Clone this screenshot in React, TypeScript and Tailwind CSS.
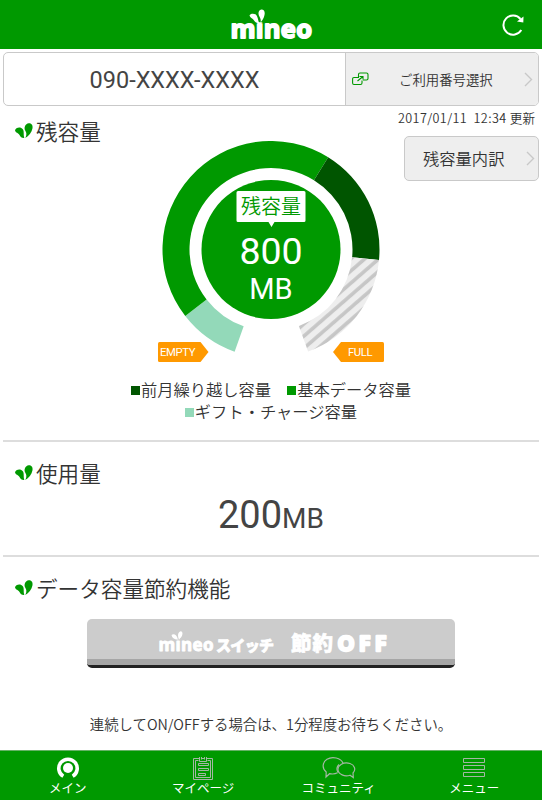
import type { ReactNode } from "react"

const CENTER_X = 113
const CENTER_Y = 108.5

const point = (angle: number, radius: number) => {
  const rad = (angle * Math.PI) / 180
  return `${CENTER_X + radius * Math.sin(rad)} ${CENTER_Y - radius * Math.cos(rad)}`
}

// angles run clockwise from twelve o'clock
const ringSlice = (from: number, to: number) => {
  const large = to - from > 180 ? 1 : 0
  return `M${point(from, 108.5)} A108.5 108.5 0 ${large} 1 ${point(to, 108.5)} L${point(to, 81.5)} A81.5 81.5 0 ${large} 0 ${point(from, 81.5)} Z`
}

const Leaves = ({ className }: { className?: string }) => (
  <svg viewBox="0 0 18 16" className={className} fill="currentColor">
    <path d="M0 7.500C0.500 4.700 5.500 3.300 7.800 6.300C9.400 8.600 8.200 11 9.300 15C6.800 15.200 5.500 14 4.500 12C3.300 9.800 0.800 10 0 7.500Z" />
    <path d="M10.300 15C12 11.800 11.500 9.500 10.300 7.800C8.500 4.500 10.300 0.800 13.700 0.200C16.800 0 18 2.600 17.500 5.200C16.800 9.500 13.700 12.700 10.300 15Z" />
  </svg>
)

const Logo = () => (
  <svg width="88" height="44" viewBox="0 0 88 44" className="text-white">
    <text
      x="3.500"
      y="34.500"
      textLength="81.500"
      className="fill-white stroke-white font-['Open_Sans'] text-[25.5px] font-bold"
      strokeWidth="1.800"
      strokeLinejoin="round"
    >
      mineo
    </text>
    <path d="M27 8H41V19.200H27Z" fill="#009900" />
    <path
      d="M22.500 12.500C23.500 10 28.500 10 30 13.200C31.200 15.500 31 17.500 32.200 19.700C29.500 20.500 27.700 18.800 26.500 16.800C25.300 15 23.300 15 22.500 12.500Z M33.500 19.500C34.300 16.500 33 14.500 31.900 12.500C30.800 9.500 32 6.800 34.300 6.400C37.200 6.300 38.200 9 37.500 12C36.900 15 35.200 17.500 33.500 19.500Z"
      fill="currentColor"
    />
  </svg>
)

const Chevron = ({ className }: { className?: string }) => (
  <svg
    width="9"
    height="15"
    viewBox="0 0 9 15"
    fill="none"
    stroke="#c8c8c8"
    strokeWidth="1.4"
    className={className}
  >
    <path d="M1 1L7.5 7.5L1 14" />
  </svg>
)

const SectionTitle = ({ children }: { children: ReactNode }) => (
  <h2 className="flex items-center text-[21.6px] leading-8 font-[350]">
    <Leaves className="mr-[3px] h-4 w-[18px] text-[#009900]" />
    {children}
  </h2>
)

const Gauge = () => (
  <svg width="226" height="222" viewBox="0 0 226 222" className="mx-auto -mt-10 block">
    <defs>
      <pattern
        id="hatch"
        width="9.2"
        height="9.2"
        patternUnits="userSpaceOnUse"
        patternTransform="rotate(-41)"
      >
        <rect width="9.2" height="9.2" fill="#eeeeee" />
        <rect width="9.2" height="3.6" y="2" fill="#c6c6c6" />
      </pattern>
    </defs>
    <path d={ringSlice(199.6, 232.2)} fill="#93d9b9" />
    <path d={ringSlice(232.2, 391.8)} fill="#009900" />
    <path d={ringSlice(31.8, 95.5)} fill="#005500" />
    <path d={ringSlice(95.5, 160)} fill="url(#hatch)" />
    <circle cx={CENTER_X} cy={CENTER_Y} r="69.5" fill="#009900" />
    <path
      d="M80 50H146Q147.500 50 147.500 51.500V79.500Q147.500 81 146 81H116.500L113.500 86L110.500 81H80Q78.500 81 78.500 79.500V51.500Q78.500 50 80 50Z"
      fill="#fff"
    />
    <g textAnchor="middle">
      <text x="113" y="73" className="fill-[#009900] text-[20px] font-[350]">
        残容量
      </text>
      <text x="113" y="123" className="fill-white font-[Roboto] text-[37.5px]">
        800
      </text>
      <text x="113" y="158" className="fill-white font-[Roboto] text-[29px]">
        MB
      </text>
    </g>
    <path d="M1.500 201H42.500L50.500 211L42.500 221H1.500Q0 221 0 219.500V202.500Q0 201 1.500 201Z" fill="#ff9900" />
    <path d="M224.500 201H183L175 211L183 221H224.500Q226 221 226 219.500V202.500Q226 201 224.500 201Z" fill="#ff9900" />
    <text x="2" y="215.300" textLength="35.500" className="fill-white font-[Roboto] text-[11.3px]">
      EMPTY
    </text>
    <text x="190" y="215.300" textLength="24.500" className="fill-white font-[Roboto] text-[11.3px]">
      FULL
    </text>
  </svg>
)

const LegendItem = ({ color, label }: { color: string; label: string }) => (
  <span className="flex items-center">
    <span className={`mt-[3px] mr-[1px] h-[9px] w-[9px] ${color}`} />
    {label}
  </span>
)

const tabs = [
  {
    label: "メイン",
    icon: (
      <svg width="24" height="24" viewBox="0 0 24 24" fill="none" stroke="white">
        <path d="M7.300 20.300A9.200 9.200 0 1 1 16.700 20.300" strokeWidth="3.600" />
        <circle cx="12" cy="12" r="5" fill="white" stroke="none" />
      </svg>
    ),
  },
  {
    label: "マイページ",
    icon: (
      <svg width="22" height="26" viewBox="0 0 22 26" fill="none" stroke="#a3b8a3" strokeWidth="1">
        <path d="M7 3.500H1.500V24.500H20.500V3.500H15M9.500 3.500H12.500" />
        <path d="M6.500 5.500H3.500V22.500H18.500V5.500H15.500M7.500 2V6.500H14.500V2M9.500 2V4.500M12.500 2V4.500" />
        <path d="M6.500 8.500H16.500V10.500H6.500ZM6.500 13.500H16.500V15.500H6.500ZM6.500 18.500H13.500V20.500H6.500Z" />
      </svg>
    ),
  },
  {
    label: "コミュニティ",
    icon: (
      <svg width="34" height="24" viewBox="0 0 34 24" fill="none" stroke="#a3b8a3" strokeWidth="1.200">
        <path d="M15.500 16.800C13.500 17.900 10 18.200 7.500 17.700L4 21L4.200 16C-0.200 12.700 0.200 6.300 5 3.300C10.500 0 18.700 2 21 7" />
        <path d="M31 17C34.300 13.700 32.500 8.800 28 7.500C21.500 5.600 15.500 9.300 16 14C16.500 18.300 22.500 21 28 19.200L31.300 21.500Z" />
        <path d="M17 8.500C14.500 11 14.500 14 16 16.500" />
      </svg>
    ),
  },
  {
    label: "メニュー",
    icon: (
      <svg width="24" height="22" viewBox="0 0 24 22" fill="none" stroke="#a3b8a3" strokeWidth="1">
        <path d="M1.500 1.500H22.500V5.500H1.500ZM1.500 8.500H22.500V12.500H1.500ZM1.500 15.500H22.500V19.500H1.500Z" />
      </svg>
    ),
  },
]

const App = () => {
  return (
    <div className="flex h-[800px] w-[542px] flex-col overflow-hidden bg-white font-['Noto_Sans_CJK_JP',sans-serif] text-[#333]">
      <header className="grid h-[49px] shrink-0 grid-cols-[1fr_88px_1fr] items-center bg-[#009900]">
        <div />
        <Logo />
        <svg
          width="24"
          height="24"
          viewBox="0 0 24 24"
          fill="none"
          stroke="white"
          strokeWidth="2"
          className="mr-[17px] justify-self-end"
        >
          <path d="M20.300 17A9.600 9.600 0 1 1 19.500 6" />
          <path d="M22.500 3.500L22.300 9.500L16 8.500Z" fill="white" stroke="none" />
        </svg>
      </header>

      <main className="px-[3px]">
        <div className="mt-[3px] flex h-[54px] overflow-hidden rounded-[5px] border border-[#c9c9c9]">
          <div className="flex flex-1 items-center justify-center pt-[4px] font-[Roboto] text-[23.5px] text-[#444]">
            090-XXXX-XXXX
          </div>
          <button className="flex w-[193px] items-center border-l border-[#c9c9c9] bg-[#eee] text-[13.4px] font-[350]">
            <svg
              width="17"
              height="14"
              viewBox="0 0 17 14"
              fill="none"
              stroke="#009900"
              strokeWidth="1.100"
              className="ml-[6px]"
            >
              <path d="M6.500 5V2.500Q6.500 1 8 1H14.500Q16 1 16 2.500V6.500Q16 8 14.500 8H11" />
              <path d="M7 5.500H2Q0.600 5.500 0.600 7V11Q0.600 12.500 2 12.500H8.500Q10 12.500 10 11V8.500M5.500 9L11 4.500M7.500 4.500H11V7.500" />
            </svg>
            <span className="ml-[30px]">ご利用番号選択</span>
            <Chevron className="mr-[5px] ml-auto" />
          </button>
        </div>

        <section className="h-[334px]">
          <div className="flex h-[75px] justify-between">
            <div className="pt-[9px] pl-[12px]">
              <SectionTitle>残容量</SectionTitle>
            </div>
            <div className="flex flex-col items-end">
              <p className="mt-[2px] mr-1 h-7 text-[12.6px] leading-5 font-[350] whitespace-pre">
                <span className="tracking-[0.4px]">2017/01/11{"  "}12:34 </span>更新
              </p>
              <button className="flex h-[46px] w-[135px] items-center rounded-[5px] border border-[#c9c9c9] bg-[#eee] pl-[18px] text-[16.3px] font-[350]">
                残容量内訳
                <Chevron className="mr-[3px] ml-auto" />
              </button>
            </div>
          </div>
          <Gauge />
          <div className="mt-[15px] flex flex-wrap justify-center gap-x-4 px-20 text-[16.3px] leading-[22px] font-[350]">
            <LegendItem color="bg-[#005500]" label="前月繰り越し容量" />
            <LegendItem color="bg-[#009900]" label="基本データ容量" />
            <LegendItem color="bg-[#93d9b9]" label="ギフト・チャージ容量" />
          </div>
        </section>

        <section className="h-[115px] border-t-2 border-[#ddd] pt-[15px] pl-[12px]">
          <SectionTitle>使用量</SectionTitle>
          <p className="mt-[4px] mr-[12px] text-center font-[Roboto] text-[38px] leading-[44px] text-[#444]">
            200<span className="text-[28px]">MB</span>
          </p>
        </section>

        <section className="border-t-2 border-[#ddd] pt-[15px] pl-[12px]">
          <SectionTitle>データ容量節約機能</SectionTitle>
          <button className="mt-[15px] ml-[72px] flex h-[49px] w-[368px] flex-col overflow-hidden rounded-[5px] border-b-[3px] border-[#222] bg-[#ccc] text-white">
            <svg width="368" height="40" viewBox="0 0 368 40">
              <g fill="white" stroke="white" strokeLinejoin="round">
                <text
                  x="71.500"
                  y="31.500"
                  textLength="55"
                  strokeWidth="0.900"
                  className="font-['Open_Sans'] text-[17px] font-bold"
                >
                  mineo
                </text>
                <text x="129" y="31.500" textLength="58" strokeWidth="0.800" className="text-[15px] font-black">
                  スイッチ
                </text>
                <text x="204" y="32" textLength="42" strokeWidth="0.600" className="text-[20.5px] font-black">
                  節約
                </text>
                <text
                  x="250.500"
                  y="31.500"
                  textLength="49"
                  strokeWidth="2.400"
                  className="font-['Open_Sans'] text-[21.5px] font-bold"
                >
                  OFF
                </text>
              </g>
              <path d="M86 14H98V20.700H86Z" fill="#cccccc" />
              <path
                d="M84.500 16C86.500 14 90 15.500 90.900 20.600C87.500 20.800 85 19 84.500 16Z M92 20.400C90.300 16.500 91 12.700 94 12.300C96.700 13.300 95.600 18 92 20.400Z"
                fill="white"
              />
            </svg>
            <span className="block h-[6px] w-full bg-[#a6a6a6]" />
          </button>
          <p className="mt-[45px] mr-[12px] text-center text-[14.4px] leading-[22px] font-[350]">
            連続してON/OFFする場合は、1分程度お待ちください。
          </p>
        </section>
      </main>

      <nav className="mt-auto grid h-[50px] shrink-0 grid-cols-4 border-t border-[#66b266] bg-[#009900] text-[12.5px] text-white">
        {tabs.map((tab) => (
          <a key={tab.label} className="flex flex-col items-center">
            <span className="mt-[4px] flex h-[26px] items-center">{tab.icon}</span>
            <span className="leading-[14px]">{tab.label}</span>
          </a>
        ))}
      </nav>
    </div>
  )
}

export default App
